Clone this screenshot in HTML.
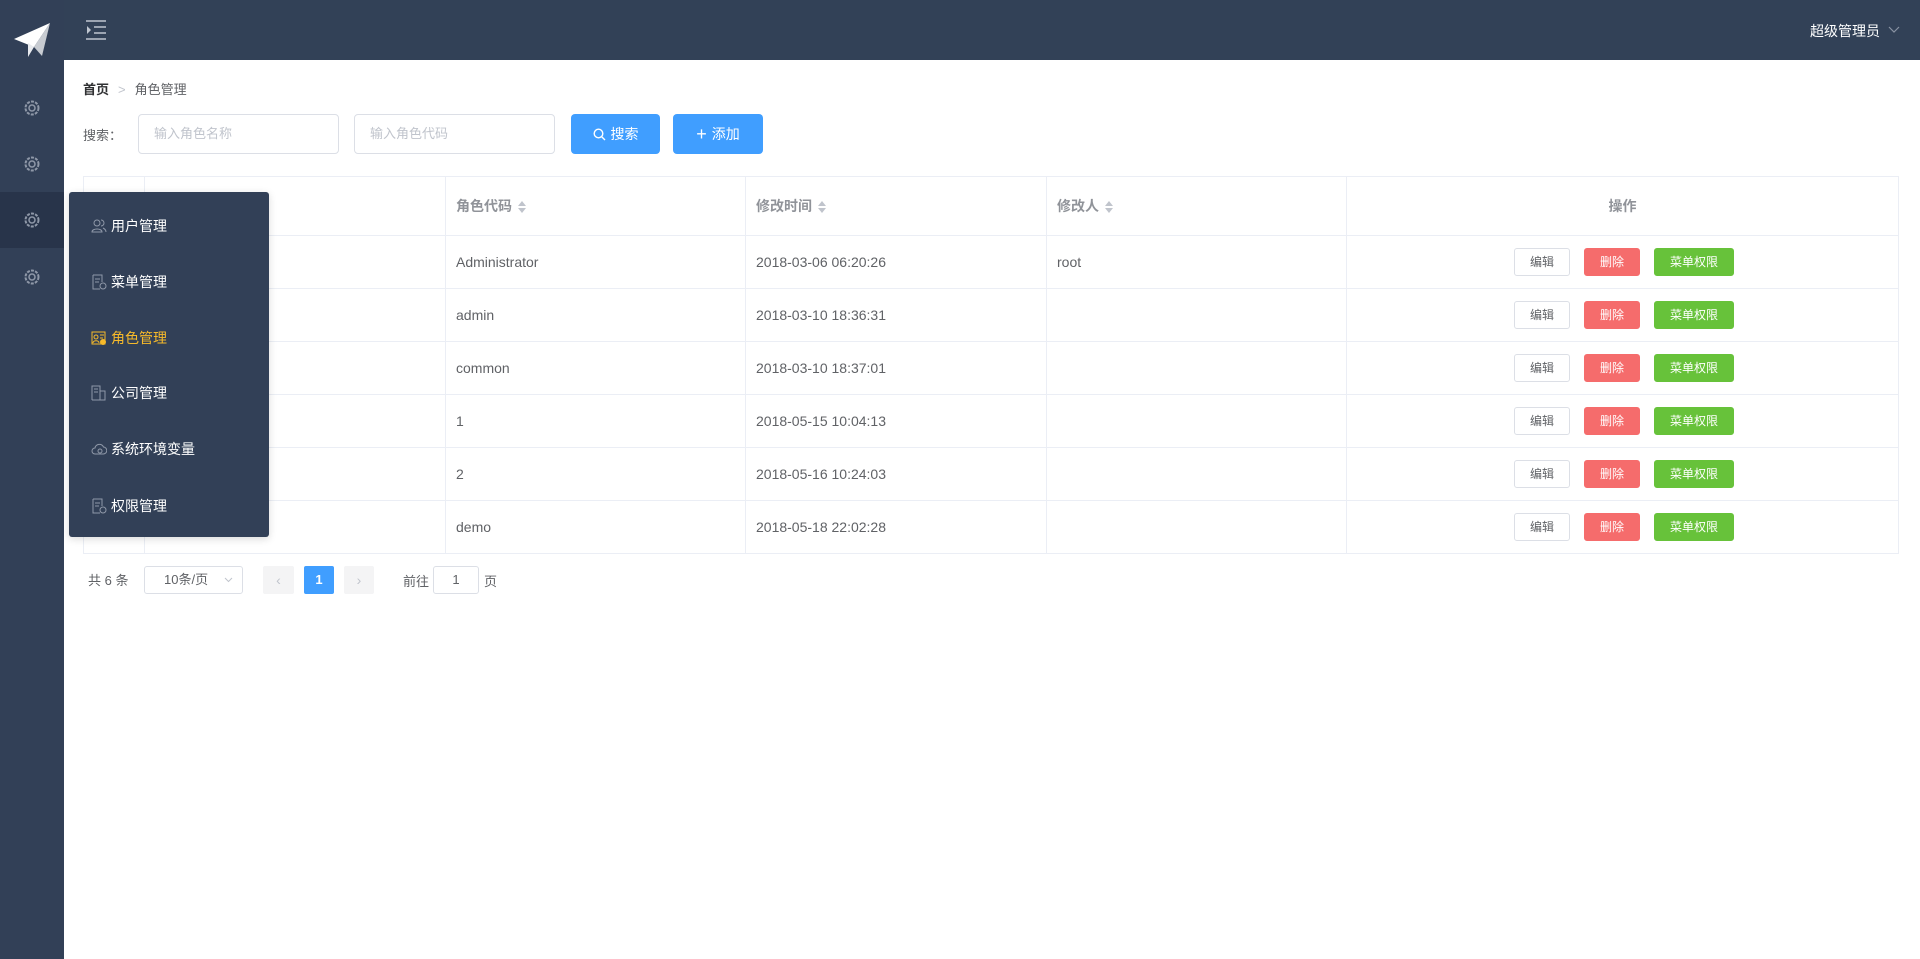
<!DOCTYPE html>
<html><head><meta charset="utf-8"><style>
*{margin:0;padding:0;box-sizing:border-box}
body{width:1920px;height:959px;background:#fff;font-family:"Liberation Sans","Noto Sans CJK SC",sans-serif;font-size:14px;color:#606266;position:relative;overflow:hidden}
.abs{position:absolute}
.side{left:0;top:0;width:64px;height:959px;background:#324057}
.head{left:64px;top:0;width:1856px;height:60px;background:#324157}
.sitem{left:0;width:64px;height:56px;display:flex;align-items:center;justify-content:center}
.pop{left:69px;top:192px;width:200px;height:345px;background:#324057;border-radius:3px;box-shadow:0 2px 8px rgba(0,0,0,.15)}
.pi{position:absolute;left:22px;color:#fff;font-size:14px;display:flex;align-items:center;gap:4px}
.inp{height:40px;border:1px solid #dcdfe6;border-radius:4px;color:#c0c4cc;font-size:13px;padding-left:15px;line-height:38px}
.btn{height:40px;border-radius:4px;background:#409eff;color:#fff;font-size:14px;display:flex;align-items:center;justify-content:center;gap:5px}
table{position:absolute;left:83px;top:176px;width:1816px;border-collapse:collapse;border:1px solid #ebeef5;table-layout:fixed}
td,th{border:1px solid #ebeef5;height:53px;text-align:left;padding-left:10px;font-weight:normal;font-size:14px;color:#606266;white-space:nowrap}
th{height:59px;color:#909399;font-weight:bold}
.car{display:inline-block;vertical-align:middle;margin-left:6px;width:8px;height:12px;position:relative}
.car:before{content:"";position:absolute;top:0;left:0;border:4px solid transparent;border-bottom:5px solid #c0c4cc;border-top:0}
.car:after{content:"";position:absolute;bottom:0;left:0;border:4px solid transparent;border-top:5px solid #c0c4cc;border-bottom:0}
.ops{padding-left:0;font-size:0}
.b{display:inline-block;height:28px;line-height:26px;font-size:12px;border-radius:3px;text-align:center;vertical-align:middle}
.be{width:56px;border:1px solid #dcdfe6;color:#606266;margin-left:167px;background:#fff}
.bd{width:56px;background:#f56c6c;color:#fff;border:1px solid #f56c6c;margin-left:14px}
.bp{width:80px;background:#67c23a;color:#fff;border:1px solid #67c23a;margin-left:14px}
</style></head><body>
<div class="abs side"></div>
<div class="abs head"></div>
<svg class="abs" style="left:12px;top:20px" width="42" height="40" viewBox="0 0 42 40"><path d="M2 19 L38 3 L22 27 Z" fill="#fff"/><path d="M38 3 L22 27 L30 36 Z" fill="#c8ccd2"/><path d="M16 23 L16 37 L22 27 Z" fill="#e8eaee"/></svg>
<svg class="abs" style="left:85px;top:19px" width="22" height="22" viewBox="0 0 22 22" fill="none" stroke="#c0c6d0" stroke-width="1.6"><path d="M1 2H21M9 8H21M9 14H21M1 20H21"/><path d="M2 7L6 11L2 15Z" fill="#c0c6d0" stroke="none"/></svg>
<div class="abs" style="left:1810px;top:21px;color:#fff;font-size:14px">超级管理员</div>
<svg class="abs" style="left:1888px;top:26px" width="12" height="8" viewBox="0 0 12 8"><path d="M1 1L6 6L11 1" stroke="#8a93a3" fill="none" stroke-width="1.2"/></svg>
<div class="abs sitem" style="top:80px"><svg width="18" height="18" viewBox="0 0 18 18"><circle cx="9" cy="9" r="6.5" fill="none" stroke="#8f98a8" stroke-width="2" stroke-dasharray="3 1.2"/><circle cx="9" cy="9" r="3" fill="none" stroke="#8f98a8" stroke-width="1.5"/></svg></div>
<div class="abs sitem" style="top:136px"><svg width="18" height="18" viewBox="0 0 18 18"><circle cx="9" cy="9" r="6.5" fill="none" stroke="#8f98a8" stroke-width="2" stroke-dasharray="3 1.2"/><circle cx="9" cy="9" r="3" fill="none" stroke="#8f98a8" stroke-width="1.5"/></svg></div>
<div class="abs sitem" style="top:192px;background:#28344a"><svg width="18" height="18" viewBox="0 0 18 18"><circle cx="9" cy="9" r="6.5" fill="none" stroke="#8f98a8" stroke-width="2" stroke-dasharray="3 1.2"/><circle cx="9" cy="9" r="3" fill="none" stroke="#8f98a8" stroke-width="1.5"/></svg></div>
<div class="abs sitem" style="top:249px"><svg width="18" height="18" viewBox="0 0 18 18"><circle cx="9" cy="9" r="6.5" fill="none" stroke="#8f98a8" stroke-width="2" stroke-dasharray="3 1.2"/><circle cx="9" cy="9" r="3" fill="none" stroke="#8f98a8" stroke-width="1.5"/></svg></div>

<div class="abs" style="left:83px;top:79px;font-size:13px"><b style="color:#303133">首页</b><span style="color:#c0c4cc;margin:0 9px">&gt;</span><span>角色管理</span></div>
<div class="abs" style="left:83px;top:125px;font-size:13px">搜索：</div>
<div class="abs inp" style="left:138px;top:114px;width:201px">输入角色名称</div>
<div class="abs inp" style="left:354px;top:114px;width:201px">输入角色代码</div>
<div class="abs btn" style="left:571px;top:114px;width:89px"><svg width="13" height="13" viewBox="0 0 13 13" fill="none" stroke="#fff" stroke-width="1.4"><circle cx="5.5" cy="5.5" r="4.3"/><path d="M8.7 8.7L12 12"/></svg>搜索</div>
<div class="abs btn" style="left:673px;top:114px;width:90px"><span style="font-size:18px;line-height:1">+</span>添加</div>

<table>
<colgroup><col style="width:61px"><col style="width:301px"><col style="width:300px"><col style="width:301px"><col style="width:300px"><col></colgroup>
<tr><th></th><th></th><th>角色代码<span class="car"></span></th><th>修改时间<span class="car"></span></th><th>修改人<span class="car"></span></th><th style="text-align:center;padding:0">操作</th></tr>
<tr><td></td><td></td><td>Administrator</td><td>2018-03-06 06:20:26</td><td>root</td><td class="ops"><span class="b be">编辑</span><span class="b bd">删除</span><span class="b bp">菜单权限</span></td></tr>
<tr><td></td><td></td><td>admin</td><td>2018-03-10 18:36:31</td><td></td><td class="ops"><span class="b be">编辑</span><span class="b bd">删除</span><span class="b bp">菜单权限</span></td></tr>
<tr><td></td><td></td><td>common</td><td>2018-03-10 18:37:01</td><td></td><td class="ops"><span class="b be">编辑</span><span class="b bd">删除</span><span class="b bp">菜单权限</span></td></tr>
<tr><td></td><td></td><td>1</td><td>2018-05-15 10:04:13</td><td></td><td class="ops"><span class="b be">编辑</span><span class="b bd">删除</span><span class="b bp">菜单权限</span></td></tr>
<tr><td></td><td></td><td>2</td><td>2018-05-16 10:24:03</td><td></td><td class="ops"><span class="b be">编辑</span><span class="b bd">删除</span><span class="b bp">菜单权限</span></td></tr>
<tr><td></td><td></td><td>demo</td><td>2018-05-18 22:02:28</td><td></td><td class="ops"><span class="b be">编辑</span><span class="b bd">删除</span><span class="b bp">菜单权限</span></td></tr>
</table>

<div class="abs" style="left:88px;top:570px;font-size:13px">共 6 条</div>
<div class="abs" style="left:144px;top:566px;width:99px;height:28px;border:1px solid #dcdfe6;border-radius:3px;font-size:13px;line-height:26px;padding-left:19px">10条/页<svg style="position:absolute;right:9px;top:10px" width="9" height="6" viewBox="0 0 9 6"><path d="M1 1L4.5 4.5L8 1" stroke="#c0c4cc" fill="none"/></svg></div>
<div class="abs" style="left:263px;top:566px;width:31px;height:28px;background:#f4f4f5;border-radius:2px;color:#c0c4cc;text-align:center;line-height:28px">‹</div>
<div class="abs" style="left:304px;top:566px;width:30px;height:28px;background:#409eff;border-radius:2px;color:#fff;text-align:center;line-height:28px;font-weight:bold;font-size:13px">1</div>
<div class="abs" style="left:344px;top:566px;width:30px;height:28px;background:#f4f4f5;border-radius:2px;color:#c0c4cc;text-align:center;line-height:28px">›</div>
<div class="abs" style="left:403px;top:571px;font-size:13px">前往</div>
<div class="abs" style="left:433px;top:566px;width:46px;height:28px;border:1px solid #dcdfe6;border-radius:3px;text-align:center;line-height:26px;font-size:13px">1</div>
<div class="abs" style="left:484px;top:571px;font-size:13px">页</div>

<div class="abs pop">
<div class="pi" style="top:24px"><svg width="16" height="14" viewBox="0 0 16 14" fill="none" stroke="#8f98a8"><circle cx="6" cy="4" r="3"/><path d="M1 13c0-4 10-4 10 0z"/><path d="M10 1a3 3 0 010 6M12 9c2 1 3 2 3 4"/></svg>用户管理</div>
<div class="pi" style="top:80px"><svg width="16" height="16" viewBox="0 0 16 16" fill="none" stroke="#8f98a8"><path d="M2 1h9v7M2 1v14h7"/><path d="M4 5h5M4 8h4"/><circle cx="12" cy="12" r="3"/></svg>菜单管理</div>
<div class="pi" style="top:136px;color:#f7ba2a"><svg width="16" height="16" viewBox="0 0 16 16" fill="none" stroke="#f7ba2a"><rect x="1" y="2" width="13" height="12"/><circle cx="5" cy="7" r="2"/><path d="M2 13c0-3 6-3 6 0M9 5h4M9 8h3"/><circle cx="12" cy="12" r="2.5" fill="#f7ba2a"/></svg>角色管理</div>
<div class="pi" style="top:191px"><svg width="16" height="16" viewBox="0 0 16 16" fill="none" stroke="#8f98a8"><path d="M1 15V1h8v14M9 6h5v9H1"/><path d="M3 4h4M3 7h4"/></svg>公司管理</div>
<div class="pi" style="top:247px"><svg width="16" height="14" viewBox="0 0 16 14" fill="none" stroke="#8f98a8"><path d="M4 12a3 3 0 010-6 4.5 4.5 0 018.5-1A3.5 3.5 0 0112 12z"/><circle cx="9" cy="9" r="2"/></svg>系统环境变量</div>
<div class="pi" style="top:304px"><svg width="16" height="16" viewBox="0 0 16 16" fill="none" stroke="#8f98a8"><path d="M2 1h9v7M2 1v14h7"/><path d="M4 5h5M4 8h4"/><circle cx="12" cy="12" r="3"/></svg>权限管理</div>
</div>
</body></html>
